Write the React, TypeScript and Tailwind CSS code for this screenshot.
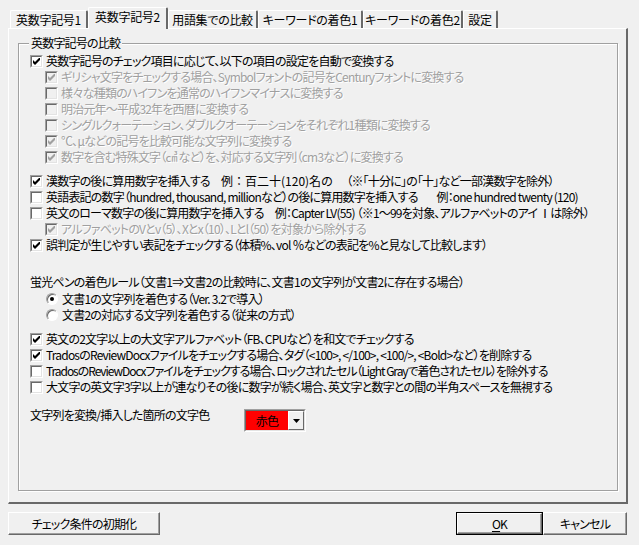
import React from "react";

type BoxProps = {
  checked?: boolean;
  disabled?: boolean;
};

function CheckBox({ checked, disabled }: BoxProps) {
  return (
    <div className="h-[13px] w-[13px] shrink-0 border border-t-[#a0a0a0] border-l-[#a0a0a0] border-r-white border-b-white">
      <div
        className={`flex h-full w-full items-center justify-center border border-t-[#696969] border-l-[#696969] border-r-[#e3e3e3] border-b-[#e3e3e3] ${
          disabled ? "bg-[#f0f0f0]" : "bg-white"
        }`}
      >
        {checked && (
          <svg width="7" height="7" viewBox="0 0 7 7">
            <path d="M0 2 L2 4 L7 -1 L7 2 L2 7 L0 5 Z" fill={disabled ? "#a0a0a0" : "#000"} />
          </svg>
        )}
      </div>
    </div>
  );
}

function Radio({ checked }: { checked?: boolean }) {
  return (
    <div className="flex h-[12px] w-[12px] shrink-0 items-center justify-center rounded-full border border-t-[#a0a0a0] border-l-[#a0a0a0] border-r-white border-b-white bg-white [box-shadow:inset_1px_1px_0_#696969]">
      {checked && <div className="h-[4px] w-[4px] rounded-full bg-black" />}
    </div>
  );
}

type RowProps = {
  checked?: boolean;
  disabled?: boolean;
  indent?: boolean;
  tight?: boolean;
  children: React.ReactNode;
};

function Row({ checked, disabled, indent, tight, children }: RowProps) {
  return (
    <div className={`flex h-[16px] items-center gap-[3px] ${indent ? "pl-[15px]" : ""}`}>
      <CheckBox checked={checked} disabled={disabled} />
      <span
        className={`whitespace-pre ${tight ? "tracking-[-1.05px]" : ""} ${
          disabled ? "text-[#a0a0a0] [text-shadow:1px_1px_0_#fff]" : "text-black"
        }`}
      >
        {children}
      </span>
    </div>
  );
}

function RadioRow({ checked, children }: { checked?: boolean; children: React.ReactNode }) {
  return (
    <div className="flex h-[16px] items-center gap-[4px] pl-[16px]">
      <Radio checked={checked} />
      <span className="whitespace-nowrap">{children}</span>
    </div>
  );
}

const tabs = [
  { label: "英数字記号1", w: "w-[78px]" },
  { label: "英数字記号2", w: "w-[80px]", active: true },
  { label: "用語集での比較", w: "w-[90px]" },
  { label: "キーワードの着色1", w: "w-[105px]" },
  { label: "キーワードの着色2", w: "w-[100px]" },
  { label: "設定", w: "w-[35px]" },
];

export default function App() {
  return (
    <div className="h-[545px] w-[639px] bg-[#f0f0f0] font-['Noto_Sans_CJK_JP',sans-serif] text-[12px] tracking-[-0.8px] text-black [font-feature-settings:'palt']">
      {/* tabs */}
      <div className="flex h-[28px] items-end pl-[10px] pt-[7px]">
        {tabs.map((t) => (
          <div
            key={t.label}
            className={`relative flex items-center justify-center whitespace-nowrap rounded-t-[2px] border-l border-t border-r-2 border-l-white border-t-white border-r-[#696969] bg-[#f0f0f0] tracking-[-0.3px] ${t.w} ${
              t.active ? "z-10 -mb-px h-[22px] pb-[3px]" : "h-[18px]"
            }`}
          >
            {t.label}
          </div>
        ))}
      </div>

      {/* panel */}
      <div className="ml-[8px] h-[476px] w-[620px] border-l border-t border-r-2 border-b-2 border-l-white border-t-white border-r-[#696969] border-b-[#696969] px-[9px] pt-[14px]">
        <div className="relative h-[448px] w-[600px] border border-[#a0a0a0] pl-[11px] pt-[9px] [box-shadow:inset_1px_1px_0_#fff,1px_1px_0_#fff]">
          <div className="absolute left-[10px] top-[-9px] bg-[#f0f0f0] px-[2px] leading-[16px]">英数字記号の比較</div>

          <Row checked>英数字記号のチェック項目に応じて、以下の項目の設定を自動で変換する</Row>
          <Row indent disabled checked>
            ギリシャ文字をチェックする場合、Symbolフォントの記号をCenturyフォントに変換する
          </Row>
          <Row indent disabled>
            様々な種類のハイフンを通常のハイフンマイナスに変換する
          </Row>
          <Row indent disabled>
            明治元年～平成32年を西暦に変換する
          </Row>
          <Row indent disabled>
            シングルクォーテーション、ダブルクオーテーションをそれぞれ1種類に変換する
          </Row>
          <Row indent disabled checked>
            ℃、μなどの記号を比較可能な文字列に変換する
          </Row>
          <Row indent disabled checked>
            数字を含む特殊文字（㎤ など）を、対応する文字列（cm3など）に変換する
          </Row>

          <div className="mt-[8px]">
            <Row checked>
              {"漢数字の後に算用数字を挿入する　"}
              <span className="tracking-[0px] [font-feature-settings:normal]">例：百二十(120)名の</span>
              {"　 （※「十分に」の「十」など一部漢数字を除外）"}
            </Row>
            <Row>
              英語表記の数字（hundred, thousand, millionなど）の後に算用数字を挿入する　    例：one hundred twenty (120)
            </Row>
            <Row>
              英文のローマ数字の後に算用数字を挿入する　例：Capter LV(55) （※1～99を対象、アルファベットのアイ Ⅰは除外）
            </Row>
            <Row indent disabled checked>
              アルファベットのVとv（5）、Xとx（10）、Lとl（50）を対象から除外する
            </Row>
            <Row checked>誤判定が生じやすい表記をチェックする（体積%、vol ％などの表記を%と見なして比較します）</Row>
          </div>

          <div className="mt-[21px] flex h-[16px] items-center whitespace-nowrap">
            蛍光ペンの着色ルール（文書1⇒文書2の比較時に、文書1の文字列が文書2に存在する場合）
          </div>
          <div className="mt-[1px]">
            <RadioRow checked>文書1の文字列を着色する（Ver. 3.2で導入）</RadioRow>
            <RadioRow>文書2の対応する文字列を着色する（従来の方式）</RadioRow>
          </div>

          <div className="mt-[8px]">
            <Row checked>英文の2文字以上の大文字アルファベット（FB、CPUなど）を和文でチェックする</Row>
            <Row checked>
              TradosのReviewDocxファイルをチェックする場合、タグ（&lt;100&gt;, &lt;/100&gt;, &lt;100/&gt;, &lt;Bold&gt;など）を削除する
            </Row>
            <Row tight>
              TradosのReviewDocxファイルをチェックする場合、ロックされたセル（Light Grayで着色されたセル）を除外する
            </Row>
            <Row>大文字の英文字3字以上が連なりその後に数字が続く場合、英文字と数字との間の半角スペースを無視する</Row>
          </div>

          <div className="mt-[12px] flex items-start">
            <div className="h-[16px] w-[214px] whitespace-nowrap leading-[16px]">文字列を変換/挿入した箇所の文字色</div>
            <div className="mt-[2px] flex h-[23px] w-[62px] border border-t-[#a0a0a0] border-l-[#a0a0a0] border-r-white border-b-white">
              <div className="flex flex-1 border border-t-[#696969] border-l-[#696969] border-r-[#e3e3e3] border-b-[#e3e3e3]">
                <div className="flex flex-1 items-center justify-center bg-[#ff0000]">赤色</div>
                <div className="flex w-[16px] items-center justify-center border border-t-white border-l-white border-r-[#696969] border-b-[#696969] bg-[#f0f0f0]">
                  <svg width="7" height="4" viewBox="0 0 7 4">
                    <path d="M0 0 H7 L3.5 4 Z" fill="#000" />
                  </svg>
                </div>
              </div>
            </div>
          </div>
        </div>
      </div>

      {/* buttons */}
      <div className="mt-[8px] flex pl-[8px] pr-[12px]">
        <button className="flex h-[23px] w-[152px] items-center justify-center border border-t-white border-l-white border-r-[#696969] border-b-[#696969] bg-[#f0f0f0] [box-shadow:inset_-1px_-1px_0_#a0a0a0]">
          チェック条件の初期化
        </button>
        <div className="flex-1" />
        <div className="h-[23px] w-[87px] border border-black">
          <button className="flex h-full w-full items-center justify-center border border-t-white border-l-white border-r-[#696969] border-b-[#696969] bg-[#f0f0f0] [box-shadow:inset_-1px_-1px_0_#a0a0a0]">
            <span className="underline underline-offset-2">O</span>K
          </button>
        </div>
        <button className="flex h-[23px] w-[84px] items-center justify-center border border-t-white border-l-white border-r-[#696969] border-b-[#696969] bg-[#f0f0f0] [box-shadow:inset_-1px_-1px_0_#a0a0a0]">
          キャンセル
        </button>
      </div>
    </div>
  );
}
